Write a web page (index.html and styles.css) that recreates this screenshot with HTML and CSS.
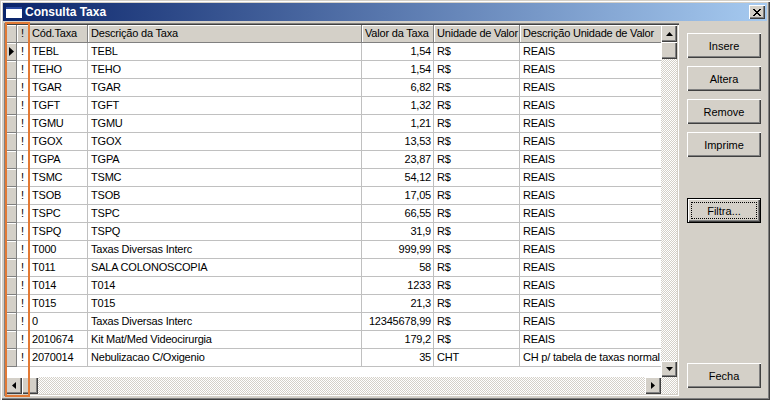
FILE: index.html
```html
<!DOCTYPE html>
<html lang="pt">
<head>
    <meta charset="UTF-8">
    <title>Consulta Taxa</title>
    <link rel="stylesheet" href="styles.css">
</head>
<body>
<div class="janela">
    <div class="titulo">
        <svg class="icone" width="16" height="11" viewBox="0 0 16 11">
            <rect x="0" y="0" width="16" height="11" fill="#fff"/>
            <rect x="0" y="0" width="16" height="2" fill="#2a4aa0"/>
        </svg>
        <span class="titulo-texto">Consulta Taxa</span>
        <div class="fechar-x">
            <svg width="8" height="7" viewBox="0 0 8 7">
                <path d="M0 0h2v1h1v1h2v-1h1v-1h2v1h-1v1h-1v1h-1v1h1v1h1v1h1v1h-2v-1h-1v-1h-2v1h-1v1h-2v-1h1v-1h1v-1h1v-1h-1v-1h-1v-1h-1z" fill="#000"/>
            </svg>
        </div>
    </div>

    <div class="conteudo">
        <div class="grade">
            <div class="grade-topo">
                <div class="tabela">
                    <div class="linha cab">
                        <div class="ind"></div>
                        <div class="exc">!</div>
                        <div>Cód.Taxa</div>
                        <div>Descrição da Taxa</div>
                        <div>Valor da Taxa</div>
                        <div>Unidade de Valor</div>
                        <div>Descrição Unidade de Valor</div>
                    </div>
                    <div class="linha">
                        <div class="ind"><svg width="5" height="9" viewBox="0 0 5 9"><path d="M0 0L5 4.5L0 9z" fill="#000"/></svg></div>
                        <div class="exc">!</div><div>TEBL</div><div>TEBL</div><div class="num">1,54</div><div>R$</div><div>REAIS</div>
                    </div>
                    <div class="linha"><div class="ind"></div><div class="exc">!</div><div>TEHO</div><div>TEHO</div><div class="num">1,54</div><div>R$</div><div>REAIS</div></div>
                    <div class="linha"><div class="ind"></div><div class="exc">!</div><div>TGAR</div><div>TGAR</div><div class="num">6,82</div><div>R$</div><div>REAIS</div></div>
                    <div class="linha"><div class="ind"></div><div class="exc">!</div><div>TGFT</div><div>TGFT</div><div class="num">1,32</div><div>R$</div><div>REAIS</div></div>
                    <div class="linha"><div class="ind"></div><div class="exc">!</div><div>TGMU</div><div>TGMU</div><div class="num">1,21</div><div>R$</div><div>REAIS</div></div>
                    <div class="linha"><div class="ind"></div><div class="exc">!</div><div>TGOX</div><div>TGOX</div><div class="num">13,53</div><div>R$</div><div>REAIS</div></div>
                    <div class="linha"><div class="ind"></div><div class="exc">!</div><div>TGPA</div><div>TGPA</div><div class="num">23,87</div><div>R$</div><div>REAIS</div></div>
                    <div class="linha"><div class="ind"></div><div class="exc">!</div><div>TSMC</div><div>TSMC</div><div class="num">54,12</div><div>R$</div><div>REAIS</div></div>
                    <div class="linha"><div class="ind"></div><div class="exc">!</div><div>TSOB</div><div>TSOB</div><div class="num">17,05</div><div>R$</div><div>REAIS</div></div>
                    <div class="linha"><div class="ind"></div><div class="exc">!</div><div>TSPC</div><div>TSPC</div><div class="num">66,55</div><div>R$</div><div>REAIS</div></div>
                    <div class="linha"><div class="ind"></div><div class="exc">!</div><div>TSPQ</div><div>TSPQ</div><div class="num">31,9</div><div>R$</div><div>REAIS</div></div>
                    <div class="linha"><div class="ind"></div><div class="exc">!</div><div>T000</div><div>Taxas Diversas Interc</div><div class="num">999,99</div><div>R$</div><div>REAIS</div></div>
                    <div class="linha"><div class="ind"></div><div class="exc">!</div><div>T011</div><div>SALA COLONOSCOPIA</div><div class="num">58</div><div>R$</div><div>REAIS</div></div>
                    <div class="linha"><div class="ind"></div><div class="exc">!</div><div>T014</div><div>T014</div><div class="num">1233</div><div>R$</div><div>REAIS</div></div>
                    <div class="linha"><div class="ind"></div><div class="exc">!</div><div>T015</div><div>T015</div><div class="num">21,3</div><div>R$</div><div>REAIS</div></div>
                    <div class="linha"><div class="ind"></div><div class="exc">!</div><div>0</div><div>Taxas Diversas Interc</div><div class="num">12345678,99</div><div>R$</div><div>REAIS</div></div>
                    <div class="linha"><div class="ind"></div><div class="exc">!</div><div>2010674</div><div>Kit Mat/Med Videocirurgia</div><div class="num">179,2</div><div>R$</div><div>REAIS</div></div>
                    <div class="linha"><div class="ind"></div><div class="exc">!</div><div>2070014</div><div>Nebulizacao C/Oxigenio</div><div class="num">35</div><div>CHT</div><div>CH p/ tabela de taxas normal</div></div>
                </div>
                <div class="vscroll">
                    <div class="seta alta"><svg width="7" height="4" viewBox="0 0 7 4"><path d="M3.5 0L7 4H0z" fill="#000"/></svg></div>
                    <div class="polegar alta"></div>
                    <div class="trilho"></div>
                    <div class="seta"><svg width="7" height="4" viewBox="0 0 7 4"><path d="M0 0H7L3.5 4z" fill="#000"/></svg></div>
                </div>
            </div>
            <div class="hscroll">
                <div class="seta"><svg width="4" height="7" viewBox="0 0 4 7"><path d="M4 0V7L0 3.5z" fill="#000"/></svg></div>
                <div class="polegar"></div>
                <div class="trilho"></div>
                <div class="seta"><svg width="4" height="7" viewBox="0 0 4 7"><path d="M0 0V7L4 3.5z" fill="#000"/></svg></div>
                <div class="canto"></div>
            </div>
        </div>

        <div class="botoes">
            <button type="button" class="botao">Insere</button>
            <button type="button" class="botao">Altera</button>
            <button type="button" class="botao">Remove</button>
            <button type="button" class="botao">Imprime</button>
            <button type="button" class="botao padrao"><span class="foco">Filtra...</span></button>
            <button type="button" class="botao fecha">Fecha</button>
        </div>
    </div>

    <div class="marca"></div>
</div>
</body>
</html>
```

FILE: styles.css
```css
body{
    margin: 0;
    background-color: #d4d0c8;
    font-family: "Liberation Sans", Arial, sans-serif;
    font-size: 11px;
    color: #000;
}
.janela{
    position: relative;
    width: 770px;
    height: 400px;
    box-sizing: border-box;
    padding: 3px;
    background-color: #d4d0c8;
    box-shadow: inset 1px 1px #d4d0c8, inset 2px 2px #fff, inset -1px -1px #404040, inset -2px -2px #808080;
}
.titulo{
    height: 18px;
    display: flex;
    align-items: center;
    padding-left: 3px;
    background: linear-gradient(to right, #0a246a, #a6caf0);
}
.icone{
    display: block;
    margin-right: 3px;
}
.titulo-texto{
    color: white;
    font-weight: bold;
    font-size: 12px;
}
.fechar-x{
    margin-left: auto;
    margin-right: 2px;
    width: 16px;
    height: 14px;
    display: flex;
    align-items: center;
    justify-content: center;
    background-color: #d4d0c8;
    box-shadow: inset 1px 1px #fff, inset -1px -1px #404040, inset -2px -2px #808080;
}
.conteudo{
    display: flex;
    margin-top: 2px;
    padding-left: 1px;
    height: 373px;
}
.grade{
    width: 675px;
    height: 373px;
    box-sizing: border-box;
    padding: 2px;
    display: flex;
    flex-direction: column;
    background-color: #d4d0c8;
    box-shadow: inset 1px 1px #808080, inset 2px 2px #404040, inset -1px -1px #fff, inset -2px -2px #d4d0c8;
}
.grade-topo{
    display: flex;
    height: 352px;
}
.tabela{
    width: 655px;
    overflow: hidden;
    background-color: white;
}
.linha{
    display: grid;
    grid-template-columns: 11px 12px 59px 274px 72px 86px 170px;
    width: 674px;
    height: 18px;
}
.linha div{
    box-sizing: border-box;
    height: 18px;
    line-height: 17px;
    padding: 0 2px 0 3px;
    letter-spacing: -0.2px;
    white-space: nowrap;
    overflow: hidden;
    border-right: 1px solid #c0c0c0;
    border-bottom: 1px solid #c0c0c0;
}
.linha .num{
    text-align: right;
    padding-right: 2px;
}
.linha .exc{
    padding: 0;
    text-align: center;
}
.linha .ind{
    padding: 0 0 0 3px;
    display: flex;
    align-items: center;
    background-color: #d4d0c8;
    box-shadow: inset 1px 1px #fff;
    border-right: 1px solid #808080;
    border-bottom: 1px solid #808080;
}
.cab div{
    background-color: #d4d0c8;
    box-shadow: inset 1px 1px #fff;
    border-right: 1px solid #808080;
    border-bottom: 1px solid #808080;
}
.vscroll{
    width: 16px;
    display: flex;
    flex-direction: column;
}
.hscroll{
    display: flex;
    height: 17px;
}
.seta, .polegar{
    flex: none;
    width: 16px;
    height: 16px;
    display: flex;
    align-items: center;
    justify-content: center;
    background-color: #d4d0c8;
    box-shadow: inset 1px 1px #fff, inset -1px -1px #404040, inset -2px -2px #808080;
}
.hscroll .seta, .hscroll .polegar{
    height: 17px;
}
.vscroll .alta{
    height: 17px;
}
.trilho, .canto{
    flex: 1;
    background-color: #fff;
    background-image: repeating-conic-gradient(#d4d0c8 0 25%, #fff 0 50%);
    background-size: 2px 2px;
}
.canto{
    flex: none;
    width: 16px;
}
.botoes{
    display: flex;
    flex-direction: column;
    gap: 8px;
    padding: 10px 0 8px 8px;
}
.botao{
    width: 74px;
    height: 25px;
    padding: 0;
    border: none;
    font-family: "Liberation Sans", Arial, sans-serif;
    font-size: 11px;
    color: #000;
    background-color: #d4d0c8;
    box-shadow: inset 1px 1px #fff, inset -1px -1px #404040, inset -2px -2px #808080;
}
.padrao{
    margin-top: 33px;
    padding: 4px;
    display: flex;
    box-shadow: inset 0 0 0 1px #000, inset 2px 2px #fff, inset -2px -2px #404040, inset -3px -3px #808080;
}
.foco{
    flex: 1;
    display: flex;
    align-items: center;
    justify-content: center;
    border: 1px dotted #000;
}
.fecha{
    margin-top: auto;
}
.marca{
    position: absolute;
    left: 5px;
    top: 22px;
    width: 25px;
    height: 375px;
    box-sizing: border-box;
    border: 2px solid #e27a35;
}
```
